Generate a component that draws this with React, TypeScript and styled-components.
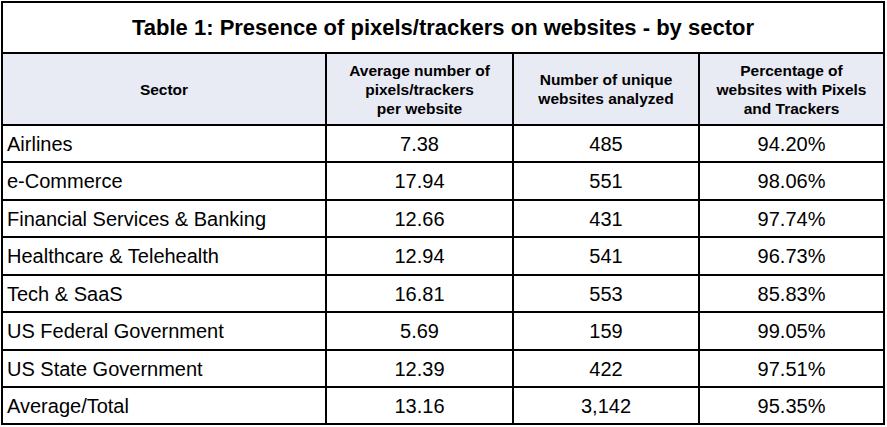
import React from "react";
import { styled, createGlobalStyle } from "styled-components";

const rows = [
  { sector: "Airlines", avg: "7.38", sites: "485", pct: "94.20%" },
  { sector: "e-Commerce", avg: "17.94", sites: "551", pct: "98.06%" },
  { sector: "Financial Services & Banking", avg: "12.66", sites: "431", pct: "97.74%" },
  { sector: "Healthcare & Telehealth", avg: "12.94", sites: "541", pct: "96.73%" },
  { sector: "Tech & SaaS", avg: "16.81", sites: "553", pct: "85.83%" },
  { sector: "US Federal Government", avg: "5.69", sites: "159", pct: "99.05%" },
  { sector: "US State Government", avg: "12.39", sites: "422", pct: "97.51%" },
  { sector: "Average/Total", avg: "13.16", sites: "3,142", pct: "95.35%" },
];

const App = () => {
  return (
    <>
      <GlobalStyle />
      <StTable>
        <StTitle>Table 1: Presence of pixels/trackers on websites - by sector</StTitle>
        <StHead>Sector</StHead>
        <StHead>
          Average number of
          <br />
          pixels/trackers
          <br />
          per website
        </StHead>
        <StHead>
          Number of unique
          <br />
          websites analyzed
        </StHead>
        <StHead>
          Percentage of
          <br />
          websites with Pixels
          <br />
          and Trackers
        </StHead>
        {rows.map((r) => (
          <React.Fragment key={r.sector}>
            <StCell align="left">{r.sector}</StCell>
            <StCell>{r.avg}</StCell>
            <StCell>{r.sites}</StCell>
            <StCell>{r.pct}</StCell>
          </React.Fragment>
        ))}
      </StTable>
    </>
  );
};

export default App;

const GlobalStyle = createGlobalStyle`
  body {
    margin: 0;
    padding: 1px;
    background: #ffffff;
    font-family: "Liberation Sans", Arial, sans-serif;
    color: #000000;
  }
`;

const StTable = styled.div`
  display: grid;
  grid-template-columns: 322px 185px 184px 183px;
  grid-template-rows: 49px 70px 35px 36px 35px 36px 35px 36px 35px 35px;
  gap: 2px;
  padding: 2px;
  width: 884px;
  box-sizing: border-box;
  background-color: #000000;
`;

const StTitle = styled.div`
  grid-column: 1 / -1;
  background-color: #ffffff;
  display: flex;
  align-items: center;
  justify-content: center;
  font-size: 22px;
  font-weight: bold;
  padding-top: 1px;
`;

const StHead = styled.div`
  background-color: #e8eaf4;
  display: flex;
  align-items: center;
  justify-content: center;
  text-align: center;
  font-size: 15.5px;
  line-height: 19px;
  font-weight: bold;
`;

const StCell = styled.div<{ align?: "left" | "center" }>`
  background-color: #ffffff;
  display: flex;
  align-items: center;
  justify-content: ${({ align }) => (align === "left" ? "flex-start" : "center")};
  padding-left: ${({ align }) => (align === "left" ? "4px" : "0")};
  font-size: 20px;
  padding-top: 1px;
`;
